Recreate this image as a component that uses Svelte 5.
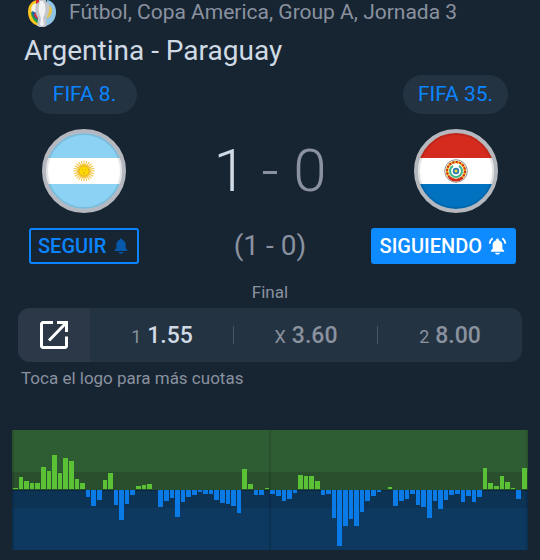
<script lang="ts">
  const odds = [
    { label: '1', value: '1.55', won: true },
    { label: 'X', value: '3.60', won: false },
    { label: '2', value: '8.00', won: false },
  ]

  // one value per minute, positive = home pressure, negative = away
  const firstHalf: number[] = [
    1, 12, 8, 6, 6, 22, 18, 34, 16, 31, 28, 10, 6, -7, -16, -10, 9, 16, -15, -30, -14, -5, 3, 4, 5,
    0, -17, -11, -8, -27, -12, -7, -5, -2, -4, -4, -10, -13, -14, -16, -23, 20, 5, -5, -5, 1,
  ]
  const secondHalf: number[] = [
    -4, -6, -11, -9, -3, 14, 13, 13, 8, -5, -4, -28, -56, -36, -29, -36, -22, -11, -6, -2, 0, 2,
    -16, -11, -9, -4, -15, -17, -28, -11, -19, -10, -5, -4, -12, -6, -12, -7, 21, 6, 3, 13, 7, 1,
    -9, 21,
  ]
  const minutes = [...firstHalf, ...secondHalf]

  const rays = Array.from({ length: 24 }, (_, i) => i * 15)

  let followingHome = $state(false)
  let followingAway = $state(true)
</script>

{#snippet bell(active: boolean)}
  <svg class="bell" class:active viewBox="0 0 20 20" aria-hidden="true">
    <path d="M10 1.600c-.8 0-1.400.6-1.400 1.300v.5C6.300 4 4.900 5.900 4.900 8.300v4L3 14.500v1.100h14v-1.100l-1.900-2.200v-4c0-2.400-1.400-4.300-3.700-4.900v-.5c0-.7-.6-1.300-1.400-1.300z" />
    <path d="M7.400 16.600h5.200c-.2 1.100-1.200 1.900-2.600 1.900s-2.400-.8-2.600-1.900z" />
    {#if active}
      <path class="ring" d="M4.900 1.400C3 2.800 1.900 4.700 1.700 7M15.100 1.400c1.900 1.400 3 3.300 3.200 5.600" />
    {/if}
  </svg>
{/snippet}

<main>
  <header>
    <div class="competition">
      <svg class="logo" viewBox="0 0 28 27" aria-hidden="true">
        <path d="M9 0C3 1 0 6 0 12c0 7 4 12 10 14l4-10z" fill="#f8c51c" />
        <path d="M19 0c6 1 9 6 9 12 0 7-4 12-10 14l-4-10z" fill="#8fc4e4" />
        <path d="M4 6c2-3 4-3 5-1v8H4c-1-3-1-5 0-7z" fill="#f4f0df" />
        <path d="M3 12c3 0 6 3 8 8v4c-4-2-8-6-8-12z" fill="#2b9b4a" />
        <path d="M4 11l5 2 2 7c-4-1-7-4-7-9z" fill="#1865ad" />
        <path d="M6 13l3 1 1 5c-3-1-4-3-4-6z" fill="#d92e36" />
        <path d="M21 5c4 3 4 8 0 12l-2 2V5z" fill="#e9c34b" />
        <path d="M8 0h4v4H8z" fill="#d9272e" />
        <path d="M11 0h7v2l3 2c1 5 0 10-3 14v2l1 5c-1 3-9 3-10 0l1-5v-2C7 14 7 9 8 4l3-2z" fill="#c3c6ca" />
        <path d="M12 1h3l2 4c1 5 0 9-2 13l1 7c-1 1-3 1-4 0l1-7c-2-4-3-8-2-13z" fill="#f1f2f3" />
      </svg>
      <span>Fútbol, Copa America, Group A, Jornada 3</span>
    </div>
    <h1>Argentina - Paraguay</h1>
  </header>

  <section class="match">
    <div class="ranks">
      <span class="rank">FIFA 8.</span>
      <span class="rank">FIFA 35.</span>
    </div>

    <div class="row flags">
      <svg class="flag" viewBox="0 0 84 84" role="img" aria-label="Argentina">
        <clipPath id="disc"><circle cx="42" cy="42" r="39" /></clipPath>
        <g clip-path="url(#disc)">
          <path fill="#8bd2f4" d="M0 0h84v84H0z" />
          <path fill="#fff" d="M0 29h84v26H0z" />
        </g>
        <g stroke="#f3c23c" stroke-width="1">
          {#each rays as angle}
            <path d="M42 31.500V37" transform="rotate({angle} 42 42)" />
          {/each}
        </g>
        <circle cx="42" cy="42" r="7" fill="#f3cb40" />
        <circle cx="42" cy="42" r="5" fill="#ffda00" stroke="#e0a521" stroke-width=".7" />
        <path d="M40 41h1m2 0h1m-3 3h2" stroke="#b98920" stroke-width=".7" />
        <circle class="shade" cx="42" cy="42" r="37" />
        <circle class="rim" cx="42" cy="42" r="40" />
      </svg>
      <p class="score">1<span>{' - 0'}</span></p>
      <svg class="flag" viewBox="0 0 84 84" role="img" aria-label="Paraguay">
        <g clip-path="url(#disc)">
          <path fill="#d52b1e" d="M0 0h84v29H0z" />
          <path fill="#fff" d="M0 29h84v26H0z" />
          <path fill="#0072c0" d="M0 55h84v29H0z" />
        </g>
        <g fill="none">
          <circle cx="42" cy="42" r="11.300" stroke="#777" stroke-width=".8" />
          <circle cx="42" cy="42" r="9" stroke="#e8b51d" stroke-width="2.600" />
          <circle cx="42" cy="42" r="9" stroke="#d52b1e" stroke-width="2" stroke-dasharray="2 1.500" />
          <path d="M35.500 48.500a9.200 9.200 0 0 0 13 0" stroke="#d52b1e" stroke-width="2.600" />
          <path d="M39 36.800a6 6 0 1 0 6 0" stroke="#3cb583" stroke-width="2" />
        </g>
        <circle cx="42" cy="42" r="3.200" fill="#2878b5" />
        <circle cx="42" cy="42" r="1.500" fill="#f5df2c" />
        <circle class="shade" cx="42" cy="42" r="37" />
        <circle class="rim" cx="42" cy="42" r="40" />
      </svg>
    </div>

    <div class="row follow">
      <button class:following={followingHome} onclick={() => (followingHome = !followingHome)}>
        {followingHome ? 'SIGUIENDO' : 'SEGUIR'}
        {@render bell(followingHome)}
      </button>
      <p class="half-time">(1 - 0)</p>
      <button class:following={followingAway} onclick={() => (followingAway = !followingAway)}>
        {followingAway ? 'SIGUIENDO' : 'SEGUIR'}
        {@render bell(followingAway)}
      </button>
    </div>

    <p class="status">Final</p>
  </section>

  <section class="odds">
    <div class="odds-bar">
      <button class="open" aria-label="Cuotas">
        <svg viewBox="0 0 28 28" aria-hidden="true">
          <path d="M13 1.500H3A1.500 1.500 0 0 0 1.500 3v22A1.500 1.500 0 0 0 3 26.500h22a1.500 1.500 0 0 0 1.500-1.500V15.500M17 1.500h9.500V11M26 2L9 19.500" />
        </svg>
      </button>
      {#each odds as { label, value, won }}
        <div class="odd" class:won>
          <span>{label}</span>
          <strong>{value}</strong>
        </div>
      {/each}
    </div>
    <p>Toca el logo para más cuotas</p>
  </section>

  <div class="momentum">
    {#each minutes as value}
      <div class="minute">
        <div class="bar" class:away={value < 0} style:height="{Math.abs(value)}px"></div>
      </div>
    {/each}
  </div>
</main>

<style>
  :global(body) {
    margin: 0;
    background: #172533;
  }

  main {
    height: 100vh;
    overflow: hidden;
    color: #8a919f;
    font-family: Roboto, sans-serif;
  }

  h1,
  p {
    margin: 0;
    font-weight: normal;
  }

  header {
    padding: 0 24px;
  }

  .competition {
    display: flex;
    align-items: flex-start;
    gap: 13px;
    padding-left: 4px;
    height: 28px;
    font-size: 21px;
    line-height: 24px;
    white-space: nowrap;
  }

  .logo {
    width: 28px;
    height: 27px;
    flex: none;
  }

  h1 {
    color: #d0dae4;
    font-size: 28px;
    line-height: 46px;
  }

  .ranks {
    display: flex;
    justify-content: space-between;
    margin-top: 1px;
    padding: 0 32px;
  }

  .rank {
    min-width: 105px;
    border-radius: 20px;
    background: #243341;
    color: #0a84ff;
    font-size: 21px;
    line-height: 39px;
    text-align: center;
  }

  .row {
    display: grid;
    grid-template-columns: 1fr auto 1fr;
    align-items: center;
    margin-top: 15px;
  }

  .row > :last-child {
    justify-self: end;
  }

  .flags {
    padding: 0 42px;
  }

  .flag {
    width: 84px;
    height: 84px;
  }

  .shade,
  .rim {
    fill: none;
    stroke: #b5b8bf;
    stroke-width: 4;
  }

  .shade {
    stroke: #000;
    stroke-opacity: 0.1;
    stroke-width: 2;
  }

  .score {
    color: #d0dae4;
    font-size: 60px;
    font-weight: 300;
    line-height: 84px;
    white-space: pre;
  }

  .score span {
    color: #8a919f;
  }

  .follow {
    padding: 0 24px;
  }

  button {
    font-family: inherit;
    cursor: pointer;
  }

  .follow button {
    display: flex;
    align-items: center;
    gap: 6px;
    height: 36px;
    padding: 0 7px;
    border: 2px solid #0a84ff;
    border-radius: 3px;
    background: none;
    color: #0a84ff;
    font-size: 20px;
    font-weight: 500;
  }

  .follow button:first-child {
    justify-self: start;
    margin-left: 5px;
  }

  .follow .following {
    background: #0d8bff;
    border-color: #0d8bff;
    color: #fff;
  }

  .bell {
    width: 18px;
    height: 18px;
    fill: #0658a8;
  }

  .bell.active {
    width: 19px;
    height: 19px;
    fill: #fff;
    overflow: visible;
  }

  .bell .ring {
    fill: none;
    stroke: #fff;
    stroke-width: 2;
  }

  .half-time {
    font-size: 28px;
    line-height: 36px;
  }

  .status {
    margin-top: 18px;
    font-size: 17px;
    line-height: 20px;
    text-align: center;
  }

  .odds {
    padding: 0 18px;
    margin-top: 6px;
  }

  .odds-bar {
    display: flex;
    height: 54px;
    border-radius: 12px;
    background: #243341;
    overflow: hidden;
  }

  .open {
    display: grid;
    place-items: center;
    width: 72px;
    padding: 0;
    border: 0;
    background: #2c3848;
  }

  .open svg {
    width: 28px;
    height: 28px;
    fill: none;
    stroke: #fff;
    stroke-width: 3;
  }

  .odd {
    flex: 1;
    display: flex;
    align-items: baseline;
    justify-content: center;
    gap: 6px;
    font-size: 18px;
    line-height: 56px;
  }

  .odd:not(:last-child) {
    background: linear-gradient(#475462, #475462) right center / 1px 18px no-repeat;
  }

  .odd strong {
    font-size: 23px;
    font-weight: 500;
  }

  .won strong {
    color: #d0dae4;
  }

  .odds p {
    padding: 6px 3px 0;
    font-size: 17px;
    line-height: 20px;
  }

  .momentum {
    display: flex;
    height: 120px;
    margin: 42px 12px 0;
    padding: 0 1px;
    box-sizing: border-box;
    background:
      linear-gradient(#0002, #0002) left / 2px 100% no-repeat,
      linear-gradient(#0002, #0002) center / 2px 100% no-repeat,
      linear-gradient(#0002, #0002) right / 2px 100% no-repeat,
      linear-gradient(#0a2740, #0a2740) 0 60px / 100% 1px no-repeat,
      linear-gradient(
        #2e5d33 42px,
        #294f2d 42px 60px,
        #0c3254 60px 78px,
        #0d385f 78px
      );
  }

  .minute {
    flex: 1;
    padding-right: 1px;
    display: flex;
    align-items: flex-end;
    height: 59px;
  }

  .bar {
    width: 100%;
    background: #5bc236;
  }

  .minute:has(.away) {
    align-items: flex-start;
    margin-top: 60px;
  }

  .away {
    background: #0a7ae6;
  }
</style>
